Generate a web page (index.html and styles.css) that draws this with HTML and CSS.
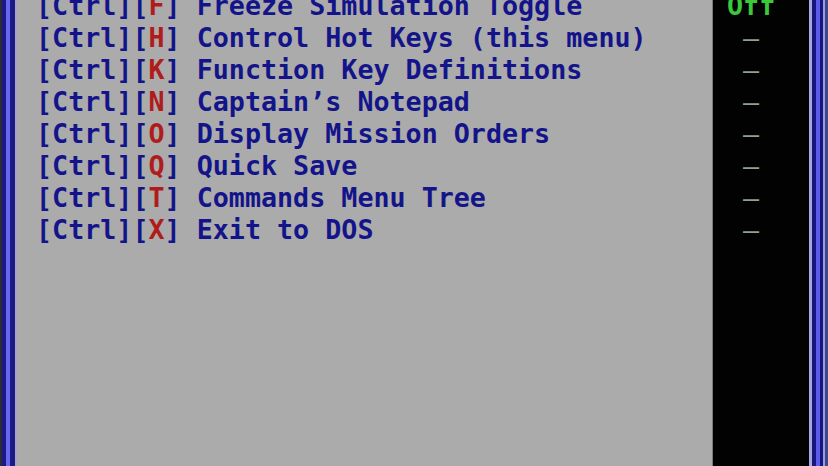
FILE: index.html
```html
<!DOCTYPE html>
<html>
<head>
<meta charset="utf-8">
<link rel="stylesheet" href="styles.css">
</head>
<body>
<div class="screen">
  <div class="edge edge-left"></div>
  <div class="menu">
    <div class="lines">
      <div class="row"><span class="br">[Ctrl][</span><span class="key">F</span><span class="br">]</span> Freeze Simulation Toggle</div>
      <div class="row"><span class="br">[Ctrl][</span><span class="key">H</span><span class="br">]</span> Control Hot Keys (this menu)</div>
      <div class="row"><span class="br">[Ctrl][</span><span class="key">K</span><span class="br">]</span> Function Key Definitions</div>
      <div class="row"><span class="br">[Ctrl][</span><span class="key">N</span><span class="br">]</span> Captain’s Notepad</div>
      <div class="row"><span class="br">[Ctrl][</span><span class="key">O</span><span class="br">]</span> Display Mission Orders</div>
      <div class="row"><span class="br">[Ctrl][</span><span class="key">Q</span><span class="br">]</span> Quick Save</div>
      <div class="row"><span class="br">[Ctrl][</span><span class="key">T</span><span class="br">]</span> Commands Menu Tree</div>
      <div class="row"><span class="br">[Ctrl][</span><span class="key">X</span><span class="br">]</span> Exit to DOS</div>
    </div>
  </div>
  <div class="status">
    <div class="lines">
      <div class="val on">Off</div>
      <div class="val"> –</div>
      <div class="val"> –</div>
      <div class="val"> –</div>
      <div class="val"> –</div>
      <div class="val"> –</div>
      <div class="val"> –</div>
      <div class="val"> –</div>
    </div>
  </div>
  <div class="edge edge-right"></div>
</div>
</body>
</html>
```

FILE: styles.css
```css
html, body {
  margin: 0;
  padding: 0;
  background: #000;
}

.screen {
  width: 828px;
  height: 466px;
  display: flex;
  overflow: hidden;
  font-family: "DejaVu Sans Mono", "Liberation Mono", monospace;
  font-weight: bold;
  font-size: 26.7px;
  line-height: 32px;
}

.edge {
  flex: none;
  height: 100%;
}

.edge-left {
  width: 17px;
  background: linear-gradient(to right,
    #2c2c3c 0, #2c2c3c 2px,
    #1a1a86 2px, #1a1a86 6px,
    #6868ee 6px, #6868ee 10px,
    #1a1a86 10px, #1a1a86 15px,
    #a4a4cc 15px, #a4a4cc 17px);
}

.edge-right {
  width: 19px;
  background: linear-gradient(to right,
    #a8a8e0 0, #a8a8e0 3px,
    #16167e 3px, #16167e 7px,
    #5c5ce8 7px, #5c5ce8 11px,
    #16167e 11px, #16167e 14px,
    #9c9cdc 14px, #9c9cdc 16px,
    #3a4a8a 16px, #3a4a8a 19px);
}

.menu {
  flex: none;
  width: 695px;
  height: 100%;
  background: #ababab;
  padding-left: 19px;
  box-sizing: border-box;
  color: #14148a;
}

.lines {
  margin-top: -10px;
}

.row, .val {
  white-space: pre;
  height: 32px;
}

.key {
  color: #b01c1c;
}

.status {
  flex: none;
  width: 82px;
  height: 100%;
  background: #020202;
  border-left: 1px solid #7a7a7a;
  padding-left: 14px;
  box-sizing: content-box;
  overflow: hidden;
  color: #8fa48f;
  font-weight: normal;
}

.status .on {
  color: #3cc83c;
  font-weight: bold;
}
```
